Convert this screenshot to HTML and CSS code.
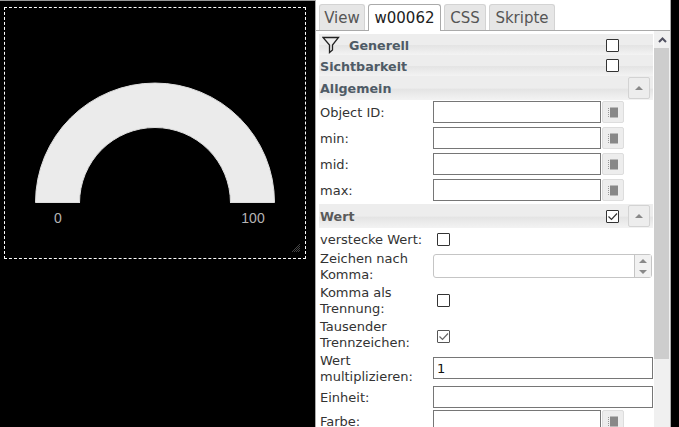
FILE: index.html
```html
<!DOCTYPE html>
<html lang="de">
<head>
<meta charset="utf-8">
<title>w00062</title>
<link rel="stylesheet" href="styles.css">
</head>
<body>
<div class="app">
  <main class="canvas">
    <div class="widget">
      <svg class="gauge" width="300" height="250" viewBox="0 0 300 250">
        <path d="M30.5 194.5A119.5 119.5 0 0 1 269.5 194.5H225.5V195A75.5 75.5 0 0 0 74.5 195V194.5Z" fill="#ebebeb" stroke="#dedede" stroke-width="1"/>
        <text x="53" y="215" class="gauge-label" text-anchor="middle">0</text>
        <text x="248" y="215" class="gauge-label" text-anchor="middle">100</text>
      </svg>
      <svg class="grip" width="8" height="8" viewBox="0 0 8 8"><path d="M0 8L8 0M2 8L8 2M4 8L8 4M6 8L8 6" stroke="#555" stroke-width="0.8"/></svg>
    </div>
  </main>
  <aside class="panel">
    <nav class="tabs">
      <span class="tab t-view">View</span>
      <span class="tab t-widget active">w00062</span>
      <span class="tab t-css">CSS</span>
      <span class="tab t-script">Skripte</span>
    </nav>
    <div class="body">
      <div class="list">
        <div class="head h-gen">
          <svg class="funnel" width="18" height="18" viewBox="0 0 18 18"><path d="M1 1.5H16.5L10.5 9V14L7.5 16.5V9Z" fill="none" stroke="#222" stroke-width="1.3"/></svg>
          <span class="head-title gen">Generell</span>
          <span class="box head-box"></span>
        </div>
        <div class="head h-sicht">
          <span class="head-title">Sichtbarkeit</span>
          <span class="box head-box"></span>
        </div>
        <div class="head h-all">
          <span class="head-title">Allgemein</span>
          <span class="collapse"><i class="tri"></i></span>
        </div>
        <div class="row r26"><label>Object ID:</label><span class="inp short"></span><span class="pick"><svg width="10" height="11" viewBox="0 0 10 11"><rect x="2" y="0.5" width="8" height="10" fill="#888"/><path d="M0.5 1V11" stroke="#999" stroke-dasharray="1 1"/></svg></span></div>
        <div class="row r26"><label>min:</label><span class="inp short"></span><span class="pick"><svg width="10" height="11" viewBox="0 0 10 11"><rect x="2" y="0.5" width="8" height="10" fill="#888"/><path d="M0.5 1V11" stroke="#999" stroke-dasharray="1 1"/></svg></span></div>
        <div class="row r26"><label>mid:</label><span class="inp short"></span><span class="pick"><svg width="10" height="11" viewBox="0 0 10 11"><rect x="2" y="0.5" width="8" height="10" fill="#888"/><path d="M0.5 1V11" stroke="#999" stroke-dasharray="1 1"/></svg></span></div>
        <div class="row r26"><label>max:</label><span class="inp short"></span><span class="pick"><svg width="10" height="11" viewBox="0 0 10 11"><rect x="2" y="0.5" width="8" height="10" fill="#888"/><path d="M0.5 1V11" stroke="#999" stroke-dasharray="1 1"/></svg></span></div>
        <div class="head h-wert">
          <span class="head-title grey">Wert</span>
          <span class="box head-box"><svg width="11" height="11" viewBox="0 0 11 11"><path d="M1.5 5.5L4.5 8.5L10 2.5" fill="none" stroke="#333" stroke-width="1.2"/></svg></span>
          <span class="collapse"><i class="tri"></i></span>
        </div>
        <div class="row r-hide"><label class="auto">verstecke Wert:</label><span class="box"></span></div>
        <div class="row r-spin"><label>Zeichen nach Komma:</label>
          <span class="spin"><span class="spin-btns"><i class="tri up"></i><i class="tri down"></i></span></span>
        </div>
        <div class="row r34"><label>Komma als Trennung:</label><span class="box in"></span></div>
        <div class="row r34"><label>Tausender Trennzeichen:</label><span class="box in lite"><svg width="11" height="11" viewBox="0 0 11 11"><path d="M1.5 5.5L4.5 8.5L10 2.5" fill="none" stroke="#666" stroke-width="1.2"/></svg></span></div>
        <div class="row r34"><label>Wert multiplizieren:</label><span class="inp full">1</span></div>
        <div class="row r-ein"><label>Einheit:</label><span class="inp full"></span></div>
        <div class="row r26"><label>Farbe:</label><span class="inp short"></span><span class="pick"><svg width="10" height="11" viewBox="0 0 10 11"><rect x="2" y="0.5" width="8" height="10" fill="#888"/><path d="M0.5 1V11" stroke="#999" stroke-dasharray="1 1"/></svg></span></div>
      </div>
      <div class="scroll">
        <span class="arrow"><svg width="9" height="6" viewBox="0 0 9 6"><path d="M1 5L4.5 1.5L8 5" fill="none" stroke="#505060" stroke-width="2"/></svg></span>
        <span class="thumb"></span>
      </div>
    </div>
  </aside>
</div>
</body>
</html>
```
FILE: styles.css
```css
* { box-sizing: border-box; }
html, body { margin: 0; height: 100%; overflow: hidden; }
body { background: #000; font-family: "DejaVu Sans", sans-serif; }
.app { display: flex; width: 679px; height: 427px; }
.canvas { width: 315px; height: 427px; background: #000; padding: 6px 0 0 4px; border-top: 1px solid #999; flex: none; }
.widget { position: relative; width: 302px; height: 252px; border: 1px dashed #fff; }
.gauge { display: block; position: absolute; left: 0; top: 0; }
.gauge-label { font-family: "Liberation Sans", sans-serif; font-size: 14px; fill: #b4b4b4; }
.grip { position: absolute; right: 5px; bottom: 6px; }
.panel { width: 356px; height: 427px; flex: none; background: #fff; border-left: 1px solid #aaa; border-right: 1px solid #aaa; display: flex; flex-direction: column; }
.tabs { display: flex; gap: 3px; height: 31px; padding: 4px 0 0 3px; border-bottom: 1px solid #aaa; flex: none; }
.tab { height: 26px; border: 1px solid #d3d3d3; border-bottom: 0; border-radius: 3px 3px 0 0; background: #e6e6e6; color: #555; font: 15px/26px "DejaVu Sans", sans-serif; text-align: center; flex: none; }
.tab.active { height: 27px; background: #fff; color: #212121; border-color: #aaa; }
.t-view { width: 46px; }
.t-widget { width: 73px; }
.t-css { width: 42px; }
.t-script { width: 66px; }
.body { flex: 1; display: flex; min-height: 0; overflow: hidden; }
.list { width: 338px; padding: 3px 1px 0 3px; flex: none; }
.head { display: flex; align-items: center; position: relative; background: linear-gradient(#ededed 0, #ededed 50%, #e4e4e4 55%, #f3f3f3 100%); font-weight: 700; font-size: 12.7px; color: #555; }
.h-gen { height: 21px; }
.h-sicht { height: 21px; }
.h-all { height: 24px; }
.h-wert { height: 24px; }
.head-title { padding-left: 1px; color: #4f5b66; }
.h-gen .head-title, .h-sicht .head-title { padding-top: 2px; }
.head-title.grey { color: #5a5a5a; }
.head-title.gen { padding-left: 9px; }
.funnel { margin-left: 3px; flex: none; }
.box { display: block; width: 13px; height: 13px; border: 1px solid #333; background: #fff; flex: none; border-radius: 1px; }
.box.lite { border-color: #555; margin-top: 4px; }
.box svg { display: block; }
.head-box { position: absolute; left: 287px; top: 5px; }
.h-sicht .head-box { top: 4px; }
.h-wert .head-box { top: 6px; }
.collapse { position: absolute; left: 309px; top: 1px; width: 22px; height: 22px; border: 1px solid #d3d3d3; border-radius: 2px; background: #ededed; display: flex; align-items: center; justify-content: center; }
.tri { display: block; width: 0; height: 0; border-left: 4px solid transparent; border-right: 4px solid transparent; border-bottom: 4px solid #888; }
.tri.down { border-bottom: 0; border-top: 4px solid #888; }
.row { display: flex; align-items: center; font-size: 13px; color: #333; line-height: 16px; }
.r26 { height: 26px; padding-bottom: 2px; }
.r34 { height: 34px; }
.r-hide { height: 22px; }
.r-spin { height: 33px; padding-bottom: 1px; }
.r-ein { height: 24px; }
.row label { width: 114px; flex: none; padding: 2px 0 0 1px; }
.row label.auto { width: 118px; white-space: nowrap; }
.inp { display: block; height: 22px; border: 1px solid #767676; background: #fff; color: #111; font-size: 13px; line-height: 22px; padding-left: 3px; flex: none; }
.short { width: 168px; }
.full { width: 220px; }
.pick { width: 22px; height: 22px; margin-left: 1px; border: 1px solid #ddd; border-radius: 2px; background: #ededed; display: flex; align-items: center; justify-content: center; flex: none; }
.spin { position: relative; display: block; width: 219px; height: 24px; border: 1px solid #c5c5c5; border-radius: 3px; flex: none; }
.spin-btns { position: absolute; right: 0; top: 0; bottom: 0; width: 17px; border-left: 1px solid #c5c5c5; background: #f1f1f1; display: flex; flex-direction: column; align-items: center; justify-content: space-around; }
.box.in { margin-left: 4px; }
.scroll { width: 16px; background: #f0f0f0; flex: none; display: flex; flex-direction: column; }
.arrow { height: 17px; display: flex; align-items: center; justify-content: center; flex: none; }
.thumb { width: 15px; height: 311px; background: #cdcdcd; flex: none; }
```
